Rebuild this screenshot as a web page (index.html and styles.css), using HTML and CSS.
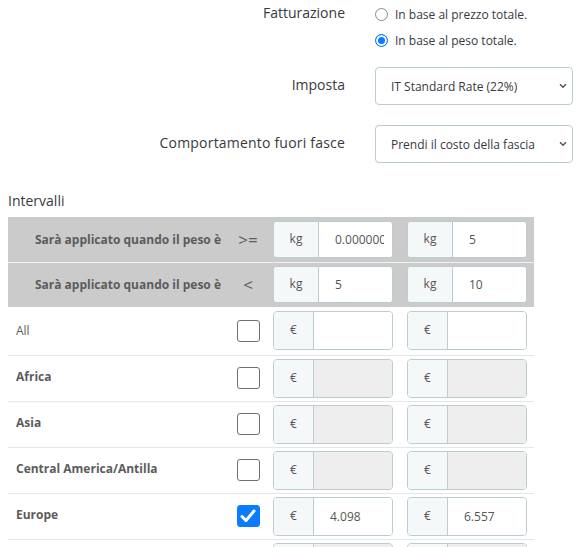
FILE: index.html
```html
<!DOCTYPE html>
<html lang="it">
<head>
    <meta charset="UTF-8">
    <meta name="viewport" content="width=device-width, initial-scale=1.0">
    <title>Corriere - Spedizione e costi</title>
    <link rel="stylesheet" href="styles.css">
</head>
<body>

    <!-- Impostazioni di fatturazione -->
    <div class="form-row billing-row">
        <div class="form-label">Fatturazione</div>
        <div class="radio-list">
            <label class="radio-item">
                <input type="radio" name="billing" value="price">
                <span>In base al prezzo totale.</span>
            </label>
            <label class="radio-item">
                <input type="radio" name="billing" value="weight" checked>
                <span>In base al peso totale.</span>
            </label>
        </div>
    </div>

    <div class="form-row select-row tax-row">
        <div class="form-label">Imposta</div>
        <div class="select-wrap">
            <select>
                <option>IT Standard Rate (22%)</option>
                <option>Nessuna imposta</option>
            </select>
            <svg class="chevron" width="8" height="6" viewBox="0 0 8 6"><path d="M1 1.2 L4 4.2 L7 1.2" fill="none" stroke="#555" stroke-width="1.5"/></svg>
        </div>
    </div>

    <div class="form-row select-row">
        <div class="form-label wide-label">Comportamento fuori fasce</div>
        <div class="select-wrap">
            <select>
                <option>Prendi il costo della fascia</option>
                <option>Disattiva il corriere</option>
            </select>
            <svg class="chevron" width="8" height="6" viewBox="0 0 8 6"><path d="M1 1.2 L4 4.2 L7 1.2" fill="none" stroke="#555" stroke-width="1.5"/></svg>
        </div>
    </div>

    <!-- Fasce di peso -->
    <h4 class="ranges-title">Intervalli</h4>

    <table class="ranges-table">
        <colgroup>
            <col class="col-name">
            <col class="col-sign">
            <col class="col-range">
            <col class="col-range">
        </colgroup>
        <tbody>
            <tr class="range-head">
                <td class="range-type">Sarà applicato quando il peso è</td>
                <td class="range-sign">&gt;=</td>
                <td><div class="input-group"><span class="addon addon-kg">kg</span><input type="text" value="0.000000"></div></td>
                <td><div class="input-group"><span class="addon addon-kg">kg</span><input type="text" value="5"></div></td>
            </tr>
            <tr class="range-head">
                <td class="range-type">Sarà applicato quando il peso è</td>
                <td class="range-sign">&lt;</td>
                <td><div class="input-group"><span class="addon addon-kg">kg</span><input type="text" value="5"></div></td>
                <td><div class="input-group"><span class="addon addon-kg">kg</span><input type="text" value="10"></div></td>
            </tr>

            <tr class="zone-row first-zone">
                <td class="zone-name zone-all">All</td>
                <td class="zone-check"><span class="checkbox"></span></td>
                <td><div class="input-group"><span class="addon">€</span><input type="text" value=""></div></td>
                <td><div class="input-group"><span class="addon">€</span><input type="text" value=""></div></td>
            </tr>
            <tr class="zone-row">
                <td class="zone-name">Africa</td>
                <td class="zone-check"><span class="checkbox"></span></td>
                <td><div class="input-group"><span class="addon">€</span><input type="text" disabled></div></td>
                <td><div class="input-group"><span class="addon">€</span><input type="text" disabled></div></td>
            </tr>
            <tr class="zone-row">
                <td class="zone-name">Asia</td>
                <td class="zone-check"><span class="checkbox"></span></td>
                <td><div class="input-group"><span class="addon">€</span><input type="text" disabled></div></td>
                <td><div class="input-group"><span class="addon">€</span><input type="text" disabled></div></td>
            </tr>
            <tr class="zone-row">
                <td class="zone-name">Central America/Antilla</td>
                <td class="zone-check"><span class="checkbox"></span></td>
                <td><div class="input-group"><span class="addon">€</span><input type="text" disabled></div></td>
                <td><div class="input-group"><span class="addon">€</span><input type="text" disabled></div></td>
            </tr>
            <tr class="zone-row">
                <td class="zone-name">Europe</td>
                <td class="zone-check">
                    <span class="checkbox checked">
                        <svg width="16" height="14" viewBox="0 0 16 14"><path d="M2 7.5 L6 11.5 L14 2" fill="none" stroke="#fff" stroke-width="3" stroke-linecap="round" stroke-linejoin="round"/></svg>
                    </span>
                </td>
                <td><div class="input-group"><span class="addon">€</span><input type="text" value="4.098"></div></td>
                <td><div class="input-group"><span class="addon">€</span><input type="text" value="6.557"></div></td>
            </tr>
            <tr class="zone-row">
                <td class="zone-name"></td>
                <td class="zone-check"></td>
                <td><div class="input-group"><span class="addon"></span><input type="text" disabled></div></td>
                <td><div class="input-group"><span class="addon"></span><input type="text" disabled></div></td>
            </tr>
        </tbody>
    </table>

</body>
</html>
```

FILE: styles.css
```css
body {
    font-family: "Open Sans", "Liberation Sans", sans-serif;
    color: #363a41;
    margin: 0;
    padding: 1px 8px 0 8px;
}

.form-row {
    display: flex;
    align-items: flex-start;
    gap: 30px;
}

.form-label {
    width: 337px;
    flex-shrink: 0;
    text-align: right;
    font-size: 14px;
    line-height: 24px;
}

.wide-label {
    letter-spacing: 0.2px;
}

.radio-list {
    display: flex;
    flex-direction: column;
}

    .radio-item {
        display: flex;
        align-items: center;
        height: 26px;
        font-size: 12px;
        gap: 7px;
    }

    .radio-item input {
        appearance: none;
        margin: 0;
        width: 13px;
        height: 13px;
        border: 1px solid #8a8a8a;
        border-radius: 50%;
        background: #fff;
    }

    .radio-item input:checked {
        border: 1.5px solid #0b7bff;
        background: #0b7bff;
        box-shadow: inset 0 0 0 2px #fff;
    }

.select-row {
    margin-top: 14px;
}

    .select-row .form-label {
        padding-top: 6px;
    }

.tax-row + .select-row {
    margin-top: 20px;
}

.select-wrap {
    position: relative;
    width: 199px;
}

    .select-wrap select {
        appearance: none;
        width: 100%;
        height: 38px;
        padding: 0 24px 0 15px;
        font-family: inherit;
        font-size: 12px;
        color: #363a41;
        background: #fff;
        border: 1px solid #bbcdd2;
        border-radius: 4px;
    }

    .select-wrap .chevron {
        position: absolute;
        right: 6px;
        top: 16px;
        pointer-events: none;
    }

.ranges-title {
    font-size: 14px;
    font-weight: normal;
    margin: 27px 0 5px 0;
    line-height: 22px;
}

.ranges-table {
    width: 526px;
    border-collapse: collapse;
    table-layout: fixed;
    font-size: 12px;
}

    .ranges-table td {
        padding: 0;
        vertical-align: middle;
    }

.col-name {
    width: 220px;
}

.col-sign {
    width: 40px;
}

.col-range {
    width: 133px;
}

.ranges-table td:nth-child(3) {
    padding-left: 5px;
}

.ranges-table td:nth-child(4) {
    padding-left: 6px;
}

.range-head {
    background-color: #cbcbcb;
    height: 45px;
}

    .range-head + .range-head {
        border-top: 1px solid #f2f2f2;
    }

    .range-head .input-group {
        height: 37px;
    }

.range-type {
    text-align: right;
    font-weight: bold;
    color: #5c5c5c;
    padding-right: 7px !important;
}

.range-sign {
    text-align: center;
    font-size: 17px;
    color: #5c5c5c;
}

.zone-row {
    height: 46px;
    border-bottom: 1px solid #e6e6e6;
}

    .zone-row.first-zone {
        height: 48px;
    }

    .zone-row .input-group {
        height: 39px;
    }

.zone-name {
    padding-left: 8px !important;
    padding-bottom: 3px !important;
    font-weight: bold;
    color: #5c5c5c;
}

.zone-all {
    font-weight: normal;
    padding-bottom: 0 !important;
}

.zone-check {
    text-align: center;
}

.checkbox {
    display: inline-flex;
    align-items: center;
    justify-content: center;
    box-sizing: border-box;
    width: 23px;
    height: 22px;
    border: 1px solid #707070;
    border-radius: 3px;
    background: #fff;
    vertical-align: middle;
}

    .checkbox.checked {
        background: #0b7bff;
        border-color: #0b7bff;
    }

.input-group {
    display: flex;
    width: 120px;
    height: 38px;
    box-sizing: border-box;
    border: 1px solid #bbcdd2;
    border-radius: 4px;
    overflow: hidden;
    background: #fff;
}

    .input-group .addon {
        width: 40px;
        flex-shrink: 0;
        display: flex;
        align-items: center;
        justify-content: center;
        background: #f5f8f9;
        border-right: 1px solid #bbcdd2;
        color: #555;
        font-size: 12px;
        padding-bottom: 2px;
        box-sizing: border-box;
    }

    .input-group .addon-kg {
        width: 45px;
    }

    .input-group input {
        flex: 1;
        min-width: 0;
        border: none;
        outline: none;
        padding: 0 8px 0 16px;
        font-family: inherit;
        font-size: 12px;
        color: #555;
        background: #fff;
    }

    .input-group input:disabled {
        background: #eeeeee;
    }
```
